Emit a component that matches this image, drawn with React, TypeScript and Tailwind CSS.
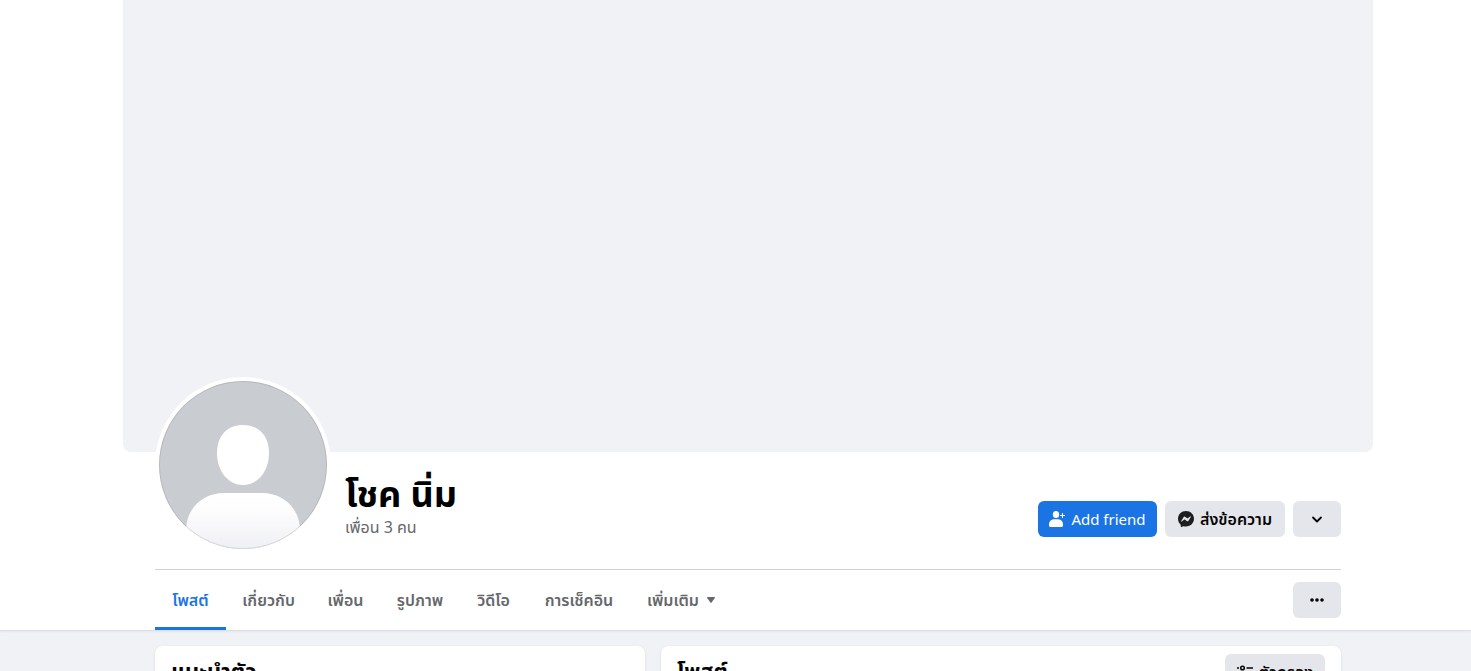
import { ReactNode } from "react";
import clsx from "clsx";

const TABS = [
  { label: "โพสต์", width: "w-[71px]" },
  { label: "เกี่ยวกับ", width: "w-[85px]" },
  { label: "เพื่อน", width: "w-[69px]" },
  { label: "รูปภาพ", width: "w-[80px]" },
  { label: "วิดีโอ", width: "w-[67px]" },
  { label: "การเช็คอิน", width: "w-[104px]" },
];

function Avatar() {
  return (
    <svg viewBox="0 0 168 168" className="size-[168px]" role="img" aria-label="โชค นิ่ม">
      <defs>
        <clipPath id="avatar-clip">
          <circle cx="84" cy="84" r="84" />
        </clipPath>
        <linearGradient id="avatar-body" x1="0" y1="0" x2="0" y2="1">
          <stop offset="0" stopColor="#ffffff" />
          <stop offset="0.3" stopColor="#fdfdfe" />
          <stop offset="1" stopColor="#eff0f4" />
        </linearGradient>
      </defs>
      <g clipPath="url(#avatar-clip)">
        <rect width="168" height="168" fill="#c9ccd1" />
        <path
          d="M84 44c15 0 26 10 26 28 0 19-12 32-26 32S58 91 58 72c0-18 11-28 26-28Z"
          fill="#fff"
        />
        <path
          d="M27 168v-18c0-23 17-38 38-38h38c21 0 38 15 38 38v18Z"
          fill="url(#avatar-body)"
        />
      </g>
      <circle cx="84" cy="84" r="83.5" fill="none" stroke="#000" strokeOpacity="0.1" />
    </svg>
  );
}

function AddFriendIcon() {
  return (
    <svg viewBox="0 0 16 16" className="size-4 shrink-0" fill="currentColor" aria-hidden="true">
      <ellipse cx="7" cy="3.5" rx="3.2" ry="3.5" />
      <path d="M0 13.4C0 10.4 2.4 8.2 5 8.2h4c2.6 0 5 2.2 5 5.2v1.1c0 .9-.6 1.5-1.5 1.5h-11C.6 16 0 15.4 0 14.5Z" />
      <path d="M13 2h1v2h2v1h-2v2h-1V5h-2V4h2Z" />
    </svg>
  );
}

function MessengerIcon() {
  return (
    <svg viewBox="0 0 16 16" className="size-4 shrink-0" aria-hidden="true">
      <path
        d="M8 0C3.5 0 0 3.3 0 7.75c0 2.3.95 4.3 2.5 5.7.13.12.2.28.2.45l.05 1.43c.01.45.48.75.9.56l1.59-.7a.65.65 0 0 1 .43-.03c.73.2 1.5.3 2.33.3 4.5 0 8-3.3 8-7.71S12.5 0 8 0Z"
        fill="#1c1e21"
      />
      <path
        d="m3.2 10 2.35-3.73a1.2 1.2 0 0 1 1.74-.32l1.87 1.4c.17.13.4.13.58 0l2.52-1.92c.34-.25.78.15.55.51l-2.35 3.73a1.2 1.2 0 0 1-1.74.32L6.85 8.59a.48.48 0 0 0-.58 0l-2.52 1.92c-.34.25-.78-.15-.55-.51Z"
        fill="#e4e6eb"
      />
    </svg>
  );
}

function FilterIcon() {
  return (
    <svg
      viewBox="0 0 16 16"
      className="size-4 shrink-0"
      fill="none"
      stroke="currentColor"
      strokeWidth="1.5"
      aria-hidden="true"
    >
      <circle cx="5.5" cy="4" r="1.8" />
      <path d="M0 4h2M9.5 4H16M0 11h7M14 11h2" />
      <circle cx="10.5" cy="11" r="1.8" />
    </svg>
  );
}

interface GrayButtonProps {
  children: ReactNode;
  className: string;
  label?: string;
}

function GrayButton({ children, className, label }: GrayButtonProps) {
  return (
    <button
      type="button"
      aria-label={label}
      className={clsx(
        "flex h-9 items-center justify-center rounded-md bg-[#e4e6eb] text-[#050505]",
        className,
      )}
    >
      {children}
    </button>
  );
}

export default function App() {
  return (
    <div className="h-screen overflow-hidden bg-[#f0f2f5] font-['Noto_Sans','Noto_Sans_Thai',sans-serif] text-[#050505]">
      <header className="border-b border-[#dcdee2] bg-white pl-[25px] shadow-xs">
        <div className="mx-auto h-[452px] max-w-[1250px] rounded-b-lg bg-[#f0f2f5]" />
        <div className="mx-auto max-w-[1186px]">
          <div className="flex items-end border-b border-[#ced0d4] pb-4">
            <div className="relative -mt-[75px] shrink-0 rounded-full bg-white p-1">
              <Avatar />
            </div>
            <div className="ml-[14px] flex-1 pb-[14px]">
              <h1 className="text-4xl leading-[42px] font-bold text-black">โชค นิ่ม</h1>
              <a href="#friends" className="block text-base leading-6 text-[#65676b]">
                เพื่อน 3 คน
              </a>
            </div>
            <div className="flex gap-2 pb-4">
              <button
                type="button"
                className="flex h-9 w-[119px] items-center justify-center gap-1.5 rounded-md bg-[#1b74e4] text-[15px] text-white"
              >
                <AddFriendIcon />
                Add friend
              </button>
              <GrayButton className="w-[120px] gap-1.5 text-base font-semibold">
                <MessengerIcon />
                ส่งข้อความ
              </GrayButton>
              <GrayButton className="w-12" label="ดูเพิ่มเติม">
                <svg
                  viewBox="0 0 16 16"
                  className="size-4"
                  fill="none"
                  stroke="currentColor"
                  strokeWidth="1.8"
                  strokeLinecap="round"
                  strokeLinejoin="round"
                >
                  <path d="m4 6.5 4 4 4-4" />
                </svg>
              </GrayButton>
            </div>
          </div>

          <div className="flex h-[60px] items-center justify-between">
            <nav className="flex h-full text-base font-semibold text-[#65676b]">
              {TABS.map((tab, i) => (
                <a
                  key={tab.label}
                  href="#"
                  className={clsx(
                    "flex items-center justify-center border-y-3 border-transparent whitespace-nowrap",
                    tab.width,
                    i === 0 && "border-b-[#1b74e4] text-[#1b74e4]",
                  )}
                >
                  {tab.label}
                </a>
              ))}
              <button type="button" className="flex w-[100px] items-center justify-center gap-2">
                เพิ่มเติม
                <svg viewBox="0 0 8 6" className="h-1.5 w-2" fill="currentColor" aria-hidden="true">
                  <path d="M.6 0h6.8c.6 0 .8.6.4 1L4.6 5.6a.8.8 0 0 1-1.2 0L.2 1C-.2.6 0 0 .6 0Z" />
                </svg>
              </button>
            </nav>
            <GrayButton className="w-12" label="ตัวเลือก">
              <svg viewBox="0 0 16 16" className="size-4" fill="currentColor">
                <circle cx="3" cy="8" r="1.8" />
                <circle cx="8" cy="8" r="1.8" />
                <circle cx="13" cy="8" r="1.8" />
              </svg>
            </GrayButton>
          </div>
        </div>
      </header>

      <main className="pt-[15px] pl-[25px]">
        <div className="mx-auto flex max-w-[1186px] gap-4">
          <section className="h-40 w-[490px] rounded-lg bg-white px-4 pt-2.5 shadow-sm">
            <h2 className="text-[22px] leading-7 font-bold">แนะนำตัว</h2>
          </section>
          <section className="flex h-40 flex-1 items-start justify-between rounded-lg bg-white px-4 pt-2 shadow-sm">
            <h2 className="pt-0.5 text-[22px] leading-7 font-bold">โพสต์</h2>
            <GrayButton className="w-[100px] gap-1.5 text-base font-semibold">
              <FilterIcon />
              ตัวกรอง
            </GrayButton>
          </section>
        </div>
      </main>
    </div>
  );
}
